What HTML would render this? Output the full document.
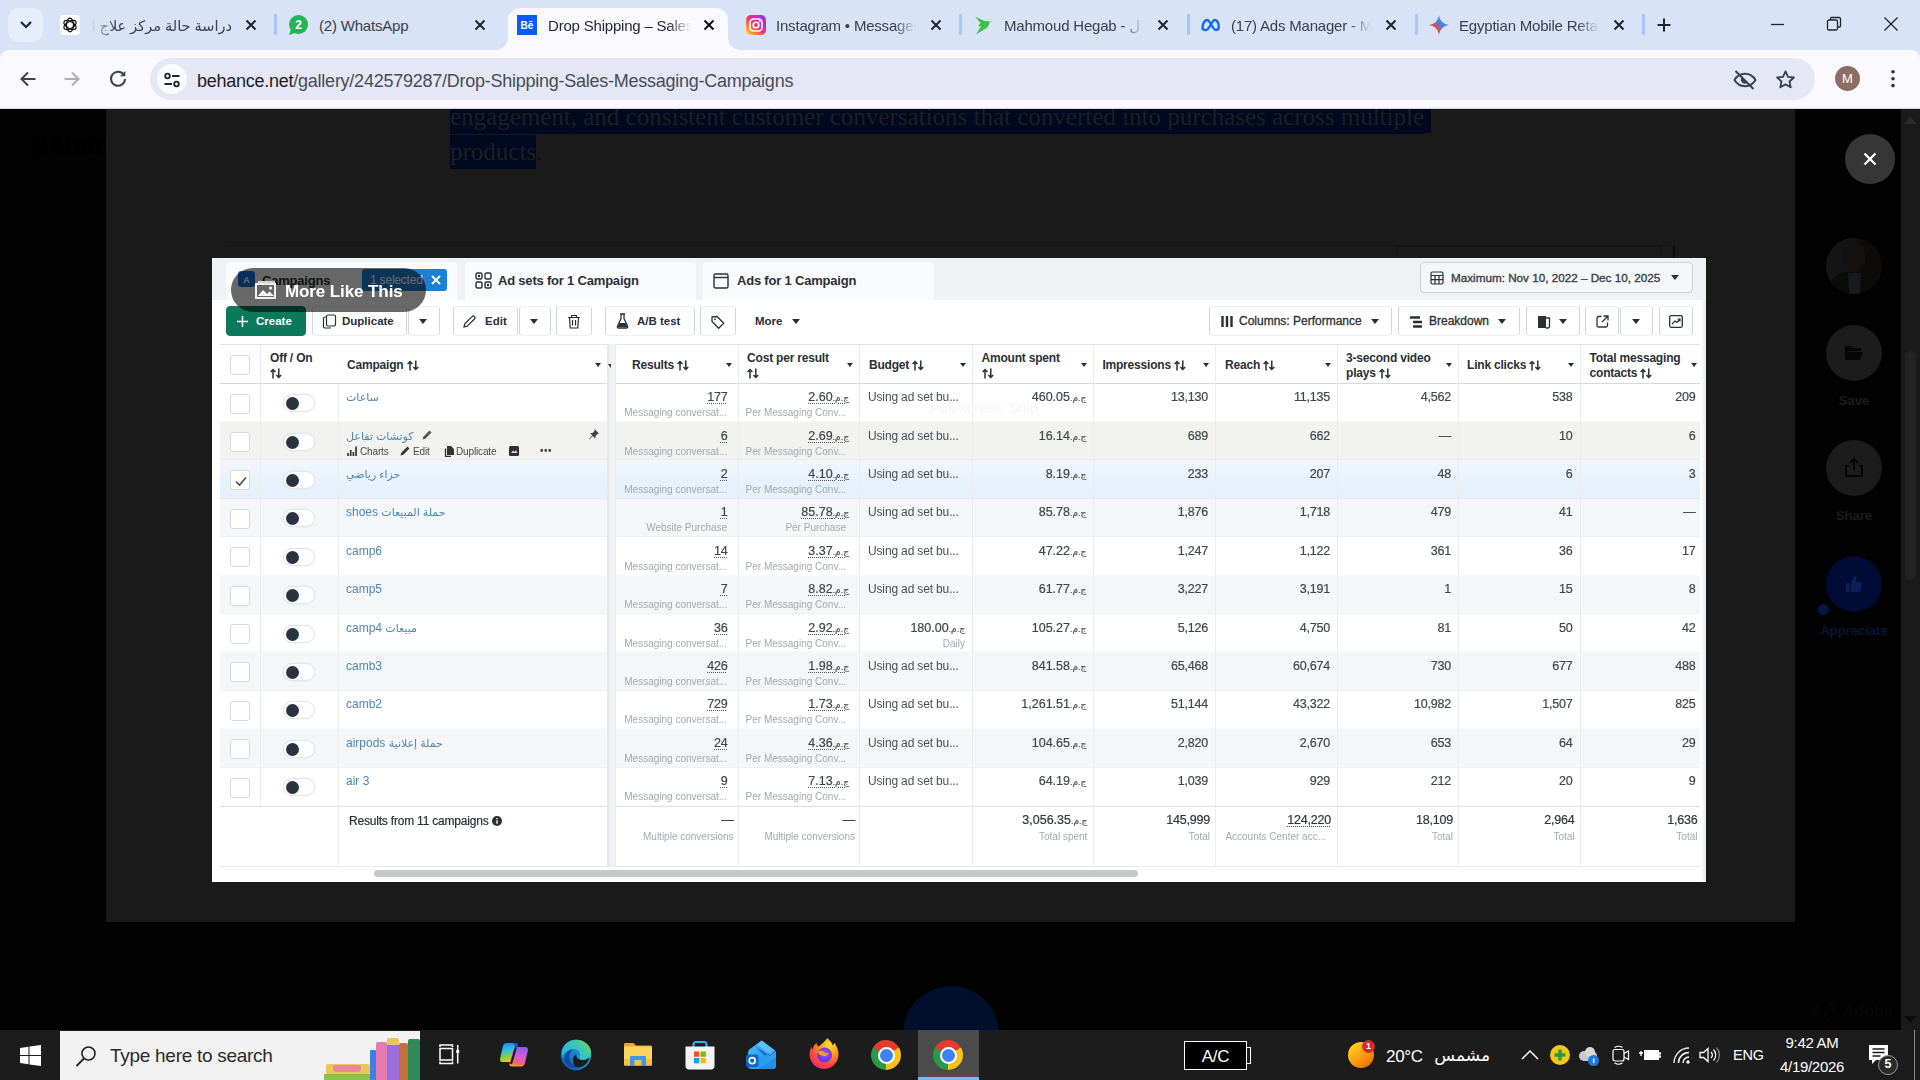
<!DOCTYPE html>
<html lang="en">
<head>
<meta charset="utf-8">
<title>Drop Shipping – Sales Messaging Campaigns</title>
<style>
*{box-sizing:border-box;margin:0;padding:0}
html,body{width:1920px;height:1080px;overflow:hidden;background:#000;font-family:"Liberation Sans","DejaVu Sans",sans-serif;}
.abs{position:absolute}
i{font-style:normal}
#tabstrip{position:absolute;left:0;top:0;width:1920px;height:62px;background:#d8e3f7;}
#toolbar{position:absolute;left:0;top:50px;width:1920px;height:58px;background:#f9f9ff;border-radius:9px 9px 0 0}
#page{position:absolute;left:0;top:108px;width:1920px;height:922px;background:#020202;overflow:hidden}
#taskbar{position:absolute;left:0;top:1030px;width:1920px;height:50px;background:#1c1c1c;}
/* tabs */
.tab{position:absolute;top:8px;height:42px;font-size:15px;color:#3a404c;white-space:nowrap}
.tab .fav{position:absolute;left:0;top:7px;width:20px;height:20px}
.tab .ttl{position:absolute;top:7px;line-height:22px;overflow:hidden;white-space:nowrap;letter-spacing:-0.2px}
.tab .cls{position:absolute;top:8px;width:18px;height:18px}
.tsep{position:absolute;top:14px;width:2.500px;height:21px;background:#a8c5fa;border-radius:1px}
#acttab{position:absolute;left:508px;top:8px;width:220px;height:42px;background:#f9f9ff;border-radius:12px 12px 0 0}
#acttab:before,#acttab:after{content:"";position:absolute;bottom:0;width:12px;height:12px;background:radial-gradient(circle at 0 0,transparent 11.5px,#f9f9ff 12px)}
#acttab:before{left:-12px}
#acttab:after{right:-12px;background:radial-gradient(circle at 100% 0,transparent 11.5px,#f9f9ff 12px)}
#omni{position:absolute;left:150px;top:8px;width:1665px;height:42px;border-radius:21px;background:#e5e8f4}
#url{position:absolute;left:47px;top:10.5px;font-size:18px;line-height:24px;color:#474c59;white-space:nowrap;letter-spacing:-0.25px}
#url b{font-weight:400;color:#1c1e24}
/* page */
#panel{position:absolute;left:106px;top:0;width:1689px;height:814px;background:#1a1a1a}
#sb{position:absolute;left:1901px;top:0;width:19px;height:922px;background:#1a1a1a}
#sbthumb{position:absolute;left:1905px;top:243px;width:11px;height:229px;border-radius:6px;background:#242424}
#seltext{position:absolute;left:450px;top:-9px;width:1020px;font-family:"Liberation Serif",serif;font-size:25px;line-height:35px;color:#0b0b0b}
#seltext span{color:#1f1f1f;background:#000920;padding:3px 0 3.5px;-webkit-box-decoration-break:clone;box-decoration-break:clone}
#img{position:absolute;left:212px;top:150px;width:1494px;height:624px;background:#fff;overflow:hidden;font-family:"Liberation Sans","DejaVu Sans",sans-serif;color:#2a3036}
#img .inner{position:absolute;left:0;top:0;width:1494px;height:624px;filter:blur(0.7px)}
#itabs{position:absolute;left:0;top:0;width:1494px;height:42px;background:#eff1f4}
.itab{position:absolute;top:4px;height:38px;background:#fafbfc;border-radius:4px 4px 0 0;font-size:13px;font-weight:700;color:#2a3036;line-height:37px;white-space:nowrap;letter-spacing:-0.2px}
#ibar{position:absolute;left:0;top:42px;width:1494px;height:44px;background:#fff}
.btn{position:absolute;top:6px;height:29.5px;border:1px solid #d2d5d9;border-top-color:#eceef0;border-bottom-color:#eceef0;border-radius:4px;font-size:11.5px;font-weight:700;color:#2a3036;line-height:29px;white-space:nowrap;background:#fff}
.btn.nb{border-color:transparent}
.caret{display:inline-block;width:0;height:0;border-left:4.5px solid transparent;border-right:4.5px solid transparent;border-top:5.5px solid #2a3036;vertical-align:middle}
#ihead{z-index:2;position:absolute;left:0;top:86px;width:1494px;height:40px;background:#fff;border-top:1px solid #dfe1e5;border-bottom:1px solid #d5d8dc}
.th{position:absolute;top:0;height:38px;font-size:12px;font-weight:700;color:#2a3036;line-height:15.5px;white-space:nowrap;letter-spacing:-0.2px}
.th .c{position:absolute;right:6px;top:12.5px;line-height:15px}
.th .c .caret{border-left-width:3.5px;border-right-width:3.5px;border-top-width:4.5px}
.srt{vertical-align:-1.5px}
.vl{z-index:3;position:absolute;width:1px;background:#eaecef}
.row{position:absolute;left:0;width:1494px;height:38.4px;box-shadow:inset 0 -1px 0 rgba(0,0,0,.025)}
.row>div,.row>svg{position:absolute}
.cb{width:20px;height:20px;border:1px solid #d6d9dd;border-radius:3px;background:#fff}
.tg{width:32px;height:18px;border-radius:9px;background:#fdfdfd;border:1px solid #e4e6e9;box-shadow:0 0 2px rgba(0,0,0,.08)}
.tg i{position:absolute;left:2px;top:2px;width:13px;height:13px;border-radius:7px;background:#2a3340}
.nm{font-size:12px;color:#4f86b4;line-height:16px;white-space:nowrap}
.ar{font-size:11px}
.acts{font-size:10px;color:#4a4a4a;white-space:nowrap;line-height:13px;letter-spacing:-0.15px}
.num{font-size:12.5px;letter-spacing:-0.2px;-webkit-text-stroke:0.2px currentColor;text-align:right;line-height:16px;color:#41464c;white-space:nowrap}
.txt{font-size:12px;letter-spacing:-0.15px;line-height:16px;color:#4a4f55;white-space:nowrap}
.sub{font-size:10px;text-align:right;line-height:12px;color:#a4a8ad;white-space:nowrap}
.ul{text-decoration:underline dotted #555;text-underline-offset:2px;text-decoration-thickness:1px}
.cur{font-size:9px;unicode-bidi:isolate;color:#555}
</style>
</head>
<body>
<div id="tabstrip">
  <div class="abs" style="left:8px;top:8px;width:35px;height:34px;border-radius:10px;background:#e6edfb"></div>
  <svg class="abs" style="left:18px;top:18px" width="16" height="14" viewBox="0 0 16 14"><path d="M3 4l5 5 5-5" fill="none" stroke="#1f2430" stroke-width="2.2"/></svg>
  <div id="acttab"></div>
  <!-- tab 1 -->
  <div class="tab" style="left:60px;width:210px">
    <svg class="fav" viewBox="0 0 20 20"><rect width="20" height="20" rx="4" fill="#fff"/><g fill="none" stroke="#111" stroke-width="1.250"><ellipse cx="10" cy="10" rx="6.800" ry="3.500" transform="rotate(30 10 10)"/><ellipse cx="10" cy="10" rx="6.800" ry="3.500" transform="rotate(90 10 10)"/><ellipse cx="10" cy="10" rx="6.800" ry="3.500" transform="rotate(150 10 10)"/></g></svg>
    <div class="ttl" dir="rtl" style="left:30px;width:142px;text-align:right;font-size:14.5px;-webkit-mask-image:linear-gradient(to right,transparent 0,#000 26px);mask-image:linear-gradient(to right,transparent 0,#000 26px)">دراسة حالة مركز علاج الإدمان</div>
    <svg class="cls" style="left:182px" viewBox="0 0 18 18"><path d="M4.500 4.500l9 9M13.500 4.500l-9 9" stroke="#1f2430" stroke-width="2"/></svg>
  </div>
  <div class="tsep" style="left:274px"></div>
  <!-- tab 2 -->
  <div class="tab" style="left:288px;width:210px">
    <svg class="fav" viewBox="0 0 20 20"><circle cx="10.500" cy="9.500" r="9.500" fill="#25b355"/><path d="M1 20l2-6 4 4z" fill="#25b355"/><text x="10.500" y="14" text-anchor="middle" font-size="12" font-weight="700" fill="#fff" font-family="Liberation Sans,sans-serif">2</text></svg>
    <div class="ttl" style="left:31px;width:150px">(2) WhatsApp</div>
    <svg class="cls" style="left:183px" viewBox="0 0 18 18"><path d="M4.500 4.500l9 9M13.500 4.500l-9 9" stroke="#1f2430" stroke-width="2"/></svg>
  </div>
  <!-- tab 3 active -->
  <div class="tab" style="left:517px;width:210px;color:#1f2430">
    <svg class="fav" viewBox="0 0 20 20"><rect width="20" height="20" fill="#0b5cff"/><text x="10" y="14" text-anchor="middle" font-size="10" font-weight="700" fill="#fff" font-family="Liberation Sans,sans-serif">Bē</text></svg>
    <div class="ttl" style="left:31px;width:143px;-webkit-mask-image:linear-gradient(to left,transparent 0,#000 22px);mask-image:linear-gradient(to left,transparent 0,#000 22px)">Drop Shipping – Sales Messaging</div>
    <svg class="cls" style="left:183px" viewBox="0 0 18 18"><path d="M4.500 4.500l9 9M13.500 4.500l-9 9" stroke="#111" stroke-width="2"/></svg>
  </div>
  <!-- tab 4 -->
  <div class="tab" style="left:746px;width:210px">
    <svg class="fav" viewBox="0 0 20 20"><defs><linearGradient id="ig" x1="0" y1="1" x2="1" y2="0"><stop offset="0" stop-color="#ffd83a"/><stop offset=".25" stop-color="#ff8a2a"/><stop offset=".5" stop-color="#f5307a"/><stop offset=".75" stop-color="#c82ac8"/><stop offset="1" stop-color="#6a3fe0"/></linearGradient></defs><rect width="20" height="20" rx="5" fill="url(#ig)"/><rect x="4" y="4" width="12" height="12" rx="3.500" fill="none" stroke="#fff" stroke-width="1.600"/><circle cx="10" cy="10" r="2.800" fill="none" stroke="#fff" stroke-width="1.600"/><circle cx="13.700" cy="6.300" r="1" fill="#fff"/></svg>
    <div class="ttl" style="left:30px;width:140px;-webkit-mask-image:linear-gradient(to left,transparent 0,#000 22px);mask-image:linear-gradient(to left,transparent 0,#000 22px)">Instagram • Messages</div>
    <svg class="cls" style="left:181px" viewBox="0 0 18 18"><path d="M4.500 4.500l9 9M13.500 4.500l-9 9" stroke="#1f2430" stroke-width="2"/></svg>
  </div>
  <div class="tsep" style="left:959px"></div>
  <!-- tab 5 -->
  <div class="tab" style="left:974px;width:210px">
    <svg class="fav" viewBox="0 0 20 20"><path d="M19.500 6.500l-4.200.3c-1-.9-2.600-1-3.800-.2L1 1.500l5.500 6.500L4 11.500l3-.5L2 19.500l8-5c3.200-1 5.200-3.800 5.500-7z" fill="#3cc04a"/></svg>
    <div class="ttl" style="left:30px;width:140px;-webkit-mask-image:linear-gradient(to left,transparent 0,#000 22px);mask-image:linear-gradient(to left,transparent 0,#000 22px)">Mahmoud Hegab - ل</div>
    <svg class="cls" style="left:180px" viewBox="0 0 18 18"><path d="M4.500 4.500l9 9M13.500 4.500l-9 9" stroke="#1f2430" stroke-width="2"/></svg>
  </div>
  <div class="tsep" style="left:1187px"></div>
  <!-- tab 6 -->
  <div class="tab" style="left:1200px;width:210px">
    <svg class="fav" style="width:22px" viewBox="0 0 22 20"><path d="M2.500 13c0-4 2-8 4.500-8 3.500 0 5.500 10 9 10 1.800 0 2.800-1.500 2.800-3.500 0-3-1.500-6.500-3.800-6.500-3.500 0-5.500 10-9 10C3.800 15 2.500 14.500 2.500 13z" fill="none" stroke="#0a66ff" stroke-width="2.300"/></svg>
    <div class="ttl" style="left:31px;width:140px;-webkit-mask-image:linear-gradient(to left,transparent 0,#000 22px);mask-image:linear-gradient(to left,transparent 0,#000 22px)">(17) Ads Manager - Manage</div>
    <svg class="cls" style="left:182px" viewBox="0 0 18 18"><path d="M4.500 4.500l9 9M13.500 4.500l-9 9" stroke="#1f2430" stroke-width="2"/></svg>
  </div>
  <div class="tsep" style="left:1415px"></div>
  <!-- tab 7 -->
  <div class="tab" style="left:1429px;width:210px">
    <svg class="fav" viewBox="0 0 20 20"><defs><linearGradient id="gm" x1="0" y1="1" x2="1" y2="0"><stop offset="0" stop-color="#f4b400"/><stop offset=".3" stop-color="#ea4335"/><stop offset=".6" stop-color="#4285f4"/><stop offset="1" stop-color="#34a853"/></linearGradient></defs><path d="M10 0c.6 5.500 4.500 9.400 10 10-5.500.6-9.400 4.500-10 10-.6-5.500-4.500-9.400-10-10 5.500-.6 9.400-4.500 10-10z" fill="url(#gm)"/></svg>
    <div class="ttl" style="left:30px;width:140px;-webkit-mask-image:linear-gradient(to left,transparent 0,#000 22px);mask-image:linear-gradient(to left,transparent 0,#000 22px)">Egyptian Mobile Retail</div>
    <svg class="cls" style="left:181px" viewBox="0 0 18 18"><path d="M4.500 4.500l9 9M13.500 4.500l-9 9" stroke="#1f2430" stroke-width="2"/></svg>
  </div>
  <div class="tsep" style="left:1642px"></div>
  <svg class="abs" style="left:1655px;top:16px" width="18" height="18" viewBox="0 0 18 18"><path d="M9 2.500v13M2.500 9h13" stroke="#1f2430" stroke-width="2"/></svg>
  <!-- window controls -->
  <svg class="abs" style="left:1770px;top:16px" width="16" height="16" viewBox="0 0 16 16"><path d="M1 8.500h13" stroke="#1f2430" stroke-width="1.300"/></svg>
  <svg class="abs" style="left:1826px;top:16px" width="16" height="16" viewBox="0 0 16 16"><rect x="1.500" y="4" width="10" height="10" rx="1.500" fill="none" stroke="#1f2430" stroke-width="1.300"/><path d="M4.500 4V2.500a1 1 0 011-1h7.500a1.500 1.500 0 011.500 1.500V10a1 1 0 01-1 1h-1.500" fill="none" stroke="#1f2430" stroke-width="1.300"/></svg>
  <svg class="abs" style="left:1883px;top:16px" width="16" height="16" viewBox="0 0 16 16"><path d="M1.500 1.500l13 13M14.500 1.500l-13 13" stroke="#1f2430" stroke-width="1.300"/></svg>
</div>
<div class="abs" style="left:0;top:108px;width:1920px;height:1px;background:#d5d8e0;z-index:9"></div>
<div id="toolbar">
  <svg class="abs" style="left:18px;top:19px" width="20" height="20" viewBox="0 0 20 20"><path d="M17.500 10H3.500M10 3.500L3.500 10l6.500 6.500" fill="none" stroke="#3a4150" stroke-width="2"/></svg>
  <svg class="abs" style="left:62px;top:19px" width="20" height="20" viewBox="0 0 20 20"><path d="M2.500 10h14M10 3.500l6.500 6.500-6.500 6.500" fill="none" stroke="#a9adb8" stroke-width="2"/></svg>
  <svg class="abs" style="left:107px;top:18px" width="22" height="22" viewBox="0 0 22 22"><path d="M17.200 7.500A7 7 0 1018 11" fill="none" stroke="#3a4150" stroke-width="2"/><path d="M18.300 3v5.300H13z" fill="#3a4150"/></svg>
  <div id="omni">
    <div class="abs" style="left:7px;top:6px;width:30px;height:30px;border-radius:15px;background:#fafbff"></div>
    <svg class="abs" style="left:13px;top:13px" width="18" height="18" viewBox="0 0 18 18"><g fill="none" stroke="#1f2430" stroke-width="1.800"><circle cx="4.500" cy="5" r="2.300"/><path d="M9 5h7.500M1.500 13H9"/><circle cx="13.500" cy="13" r="2.300"/></g></svg>
    <div id="url"><b>behance.net</b>/gallery/242579287/Drop-Shipping-Sales-Messaging-Campaigns</div>
    <svg class="abs" style="left:1583px;top:11px" width="24" height="22" viewBox="0 0 24 22"><g fill="none" stroke="#3a3f4a" stroke-width="1.900"><path d="M1.500 11c2.300-4 6-6.200 10.500-6.200S20.200 7 22.500 11c-2.300 4-6 6.200-10.500 6.200S3.800 15 1.500 11z"/><path d="M2.500 2l18 18"/></g><path d="M8.500 8.500a4 4 0 005.500 5.500z" fill="#3a3f4a"/></svg>
    <svg class="abs" style="left:1625px;top:11px" width="21" height="21" viewBox="0 0 22 22"><path d="M11 2.500l2.600 5.700 6.200.7-4.600 4.200 1.300 6.100L11 16.100l-5.500 3.100 1.300-6.100L2.200 8.900l6.200-.7z" fill="none" stroke="#3a3f4a" stroke-width="1.900" stroke-linejoin="round"/></svg>
  </div>
  <div class="abs" style="left:1835px;top:16px;width:25px;height:25px;border-radius:13px;background:#8d6e63;color:#fff;font-size:13px;line-height:26px;text-align:center">M</div>
  <svg class="abs" style="left:1888.500px;top:18px" width="8" height="22" viewBox="0 0 8 22"><circle cx="4" cy="3.800" r="1.800" fill="#2a3140"/><circle cx="4" cy="10.700" r="1.800" fill="#2a3140"/><circle cx="4" cy="17.600" r="1.800" fill="#2a3140"/></svg>
</div>
<div id="page">
  <div class="abs" style="left:30px;top:22px;font-size:26px;font-weight:700;color:#000;letter-spacing:0.5px">Bēhance</div>
  <div id="panel"></div>
  <div class="abs" style="left:1424px;top:1px;width:7px;height:24px;background:#000920"></div>
  <div id="seltext"><span>engagement, and consistent customer conversations that converted into purchases across multiple products</span>.</div>
  <div class="abs" style="left:225px;top:137px;width:1450px;height:14px;border-top:1px solid #141414;border-right:2px solid #0c0c0c"></div>
  <div class="abs" style="left:1397px;top:138px;width:265px;height:12px;border:1px solid #141414;border-bottom:0;border-radius:3px 3px 0 0"></div>
  <div id="img"><div class="inner">
    <div id="itabs">
      <div class="itab" style="left:14px;width:231px">
        <div class="abs" style="left:12px;top:9px;width:17px;height:16px;border-radius:3px;background:#1a72e0;color:#fff;font-size:9px;line-height:18px;text-align:center;font-weight:700">A</div>
        <div class="abs" style="left:36px;top:0">Campaigns</div>
        <div class="abs" style="left:136px;top:7px;width:85px;height:22px;border-radius:3px;background:#1b7fd3;color:#fff;font-size:12px;font-weight:400;line-height:22px;padding-left:8px">1 selected</div>
        <svg class="abs" style="left:205px;top:13px" width="10" height="10" viewBox="0 0 10 10"><path d="M1 1l8 8M9 1L1 9" stroke="#fff" stroke-width="1.800"/></svg>
      </div>
      <div class="itab" style="left:253px;width:231px">
        <svg class="abs" style="left:10px;top:10px" width="17" height="17" viewBox="0 0 17 17"><g fill="none" stroke="#2a3036" stroke-width="1.400"><rect x="1" y="1" width="6" height="6" rx="1.500"/><rect x="10" y="1" width="6" height="6" rx="1.500"/><rect x="1" y="10" width="6" height="6" rx="1.500"/><rect x="10" y="10" width="6" height="6" rx="1.500"/></g><circle cx="4" cy="4" r="1.200" fill="#2a3036"/><circle cx="13" cy="13" r="1.200" fill="#2a3036"/></svg>
        <div class="abs" style="left:33px;top:0">Ad sets for 1 Campaign</div>
      </div>
      <div class="itab" style="left:491px;width:231px">
        <svg class="abs" style="left:10px;top:11px" width="16" height="16" viewBox="0 0 16 16"><rect x="1" y="1" width="14" height="14" rx="1.500" fill="none" stroke="#2a3036" stroke-width="1.400"/><path d="M1 4.500h14" stroke="#2a3036" stroke-width="1.400"/></svg>
        <div class="abs" style="left:34px;top:0">Ads for 1 Campaign</div>
      </div>
      <div class="abs" style="left:1208px;top:4px;width:273px;height:31px;border:1px solid #ccd0d5;border-radius:4px;background:#f5f6f7;font-size:11.5px;font-weight:700;line-height:30px;color:#2a3036;white-space:nowrap">
        <svg class="abs" style="left:9px;top:8px" width="14" height="14" viewBox="0 0 14 14"><g fill="none" stroke="#2a3036" stroke-width="1.200"><rect x="1" y="1" width="12" height="12" rx="1.500"/><path d="M1 4.500h12M1 8.700h12M5 4.500V13M9 4.500V13"/></g></svg>
        <div class="abs" style="left:30px;top:0;font-weight:400;font-size:11.700px;color:#3a4046;-webkit-text-stroke:0.35px #3a4046">Maximum: Nov 10, 2022 – Dec 10, 2025</div>
        <span class="caret abs" style="left:250px;top:12px"></span>
      </div>
    </div>
    <div id="ibar">
      <div class="btn" style="left:14px;width:80px;background:#0b7a5b;border-color:#0b7a5b;color:#fff"><svg class="abs" style="left:10px;top:9px" width="11" height="11" viewBox="0 0 11 11"><path d="M5.500 0v11M0 5.500h11" stroke="#fff" stroke-width="1.500"/></svg><span class="abs" style="left:29px;top:0">Create</span></div>
      <div class="btn" style="left:100px;width:95px"><svg class="abs" style="left:9px;top:7px" width="15" height="15" viewBox="0 0 15 15"><g fill="none" stroke="#2a3036" stroke-width="1.200"><rect x="4.500" y="1" width="9" height="11" rx="1.500"/><path d="M4.500 3H3a1.500 1.500 0 00-1.500 1.500v8A1.500 1.500 0 003 14h6"/></g></svg><span class="abs" style="left:29px;top:0">Duplicate</span></div>
      <div class="btn" style="left:196px;width:32px"><span class="caret abs" style="left:10px;top:12px"></span></div>
      <div class="btn" style="left:241px;width:65px"><svg class="abs" style="left:9px;top:8px" width="13" height="13" viewBox="0 0 13 13"><path d="M1 12l.8-3.200 7.500-7.500a1.200 1.200 0 011.700 0l.7.700a1.200 1.200 0 010 1.700L4.200 11.200z" fill="none" stroke="#2a3036" stroke-width="1.200"/></svg><span class="abs" style="left:31px;top:0">Edit</span></div>
      <div class="btn" style="left:307px;width:32px"><span class="caret abs" style="left:10px;top:12px"></span></div>
      <div class="btn" style="left:344px;width:36px"><svg class="abs" style="left:10px;top:7px" width="14" height="15" viewBox="0 0 14 15"><g fill="none" stroke="#2a3036" stroke-width="1.200"><path d="M1 3.500h12M4.500 3.500V1.500h5v2M2.500 3.500l.7 10.500h7.600l.7-10.500M5.500 6v5.500M8.500 6v5.500"/></g></svg></div>
      <div class="btn" style="left:393px;width:90px"><svg class="abs" style="left:10px;top:6px" width="13" height="16" viewBox="0 0 13 16"><path d="M4 1h5M5 1v4.500L1.500 13a1.300 1.300 0 001.200 2h7.600a1.300 1.300 0 001.200-2L8 5.500V1" fill="none" stroke="#2a3036" stroke-width="1.300"/><path d="M3.500 10h6l2 4h-10z" fill="#2a3036"/></svg><span class="abs" style="left:31px;top:0">A/B test</span></div>
      <div class="btn" style="left:488px;width:36px"><svg class="abs" style="left:10px;top:8px" width="14" height="14" viewBox="0 0 14 14"><path d="M1 1.800v4.700l6.700 6.700 5-5L6 1.500z" fill="none" stroke="#2a3036" stroke-width="1.300" stroke-linejoin="round"/><circle cx="4" cy="4.300" r=".9" fill="#2a3036"/></svg></div>
      <div class="btn nb" style="left:532px;width:70px"><span class="abs" style="left:10px;top:0">More</span><span class="caret abs" style="left:47px;top:12px"></span></div>
      <div class="btn" style="left:997px;width:183px"><svg class="abs" style="left:11px;top:9px" width="12" height="11" viewBox="0 0 12 11"><path d="M1.500 0v11M6 0v11M10.500 0v11" stroke="#2a3036" stroke-width="2.400"/></svg><span class="abs" style="left:29px;top:0;font-size:12px;font-weight:400;color:#30363c;-webkit-text-stroke:0.35px #30363c">Columns: Performance</span><span class="caret abs" style="left:161px;top:12px"></span></div>
      <div class="btn" style="left:1186px;width:122px"><svg class="abs" style="left:11px;top:9px" width="12" height="12" viewBox="0 0 12 12"><path d="M0 1.500h10M3 6h9M3 10.500h9" stroke="#2a3036" stroke-width="2.600"/></svg><span class="abs" style="left:30px;top:0;font-size:12px;font-weight:400;-webkit-text-stroke:0.35px #30363c">Breakdown</span><span class="caret abs" style="left:99px;top:12px"></span></div>
      <div class="btn" style="left:1314px;width:54px"><svg class="abs" style="left:10px;top:8px" width="14" height="14" viewBox="0 0 14 14"><path d="M1 1h8v12H1z" fill="#2a3036"/><path d="M9 3h3.500v8.500A1.500 1.500 0 0111 13H9" fill="none" stroke="#2a3036" stroke-width="1.300"/></svg><span class="caret abs" style="left:32px;top:12px"></span></div>
      <div class="btn" style="left:1373px;width:34px"><svg class="abs" style="left:10px;top:8px" width="13" height="13" viewBox="0 0 13 13"><path d="M5.500 1.500H2.500a1.500 1.500 0 00-1.500 1.500v7.500A1.500 1.500 0 002.500 12H10a1.500 1.500 0 001.500-1.500V7.500M7.500 1h4.500v4.500M12 1L6 7" fill="none" stroke="#2a3036" stroke-width="1.300"/></svg></div>
      <div class="btn" style="left:1408px;width:33px"><span class="caret abs" style="left:11px;top:12px"></span></div>
      <div class="btn" style="left:1447px;width:34px"><svg class="abs" style="left:9px;top:8px" width="14" height="13" viewBox="0 0 14 13"><rect x=".700" y=".700" width="12.600" height="11.600" rx="1.500" fill="none" stroke="#2a3036" stroke-width="1.300"/><path d="M3 9l3-3 2 1.500L11 4M8.500 4H11v2.500" fill="none" stroke="#2a3036" stroke-width="1.200"/></svg></div>
    </div>
<div id="ihead">
<div class="cb abs" style="left:18px;top:10px"></div>
<div class="th" style="left:58px;top:5.5px">Off / On<br><svg class="srt" width="12" height="11" viewBox="0 0 12 11"><path d="M3 10.500V1.500M0.600 4L3 1.500 5.400 4M8.800 0.500v9M6.400 7l2.400 2.500L11.200 7" fill="none" stroke="#2a3036" stroke-width="1.500"/></svg></div>
<div class="th" style="left:126px;width:268.6px"><div class="abs" style="left:9px;top:13px">Campaign <svg class="srt" width="12" height="11" viewBox="0 0 12 11"><path d="M3 10.500V1.500M0.600 4L3 1.500 5.400 4M8.800 0.500v9M6.400 7l2.400 2.500L11.200 7" fill="none" stroke="#2a3036" stroke-width="1.500"/></svg></div><span class="c"><span class="caret"></span></span></div>
<div class="th" style="left:404.5px;width:121.1px"><div class="abs" style="left:15.5px;top:13px">Results <svg class="srt" width="12" height="11" viewBox="0 0 12 11"><path d="M3 10.500V1.500M0.600 4L3 1.500 5.400 4M8.800 0.500v9M6.400 7l2.400 2.500L11.200 7" fill="none" stroke="#2a3036" stroke-width="1.500"/></svg></div><span class="c"><span class="caret"></span></span></div>
<div class="th" style="left:525.6px;width:121.4px"><div class="abs" style="left:9.5px;top:5.5px">Cost per result<br><svg class="srt" width="12" height="11" viewBox="0 0 12 11"><path d="M3 10.500V1.500M0.600 4L3 1.500 5.400 4M8.800 0.500v9M6.400 7l2.400 2.500L11.200 7" fill="none" stroke="#2a3036" stroke-width="1.500"/></svg></div><span class="c"><span class="caret"></span></span></div>
<div class="th" style="left:647px;width:113.0px"><div class="abs" style="left:10px;top:13px">Budget <svg class="srt" width="12" height="11" viewBox="0 0 12 11"><path d="M3 10.500V1.500M0.600 4L3 1.500 5.400 4M8.800 0.500v9M6.400 7l2.400 2.500L11.200 7" fill="none" stroke="#2a3036" stroke-width="1.500"/></svg></div><span class="c"><span class="caret"></span></span></div>
<div class="th" style="left:760px;width:121.4px"><div class="abs" style="left:9.5px;top:5.5px">Amount spent<br><svg class="srt" width="12" height="11" viewBox="0 0 12 11"><path d="M3 10.500V1.500M0.600 4L3 1.500 5.400 4M8.800 0.500v9M6.400 7l2.400 2.500L11.200 7" fill="none" stroke="#2a3036" stroke-width="1.500"/></svg></div><span class="c"><span class="caret"></span></span></div>
<div class="th" style="left:881.4px;width:121.6px"><div class="abs" style="left:9px;top:13px">Impressions <svg class="srt" width="12" height="11" viewBox="0 0 12 11"><path d="M3 10.500V1.500M0.600 4L3 1.500 5.400 4M8.800 0.500v9M6.400 7l2.400 2.500L11.200 7" fill="none" stroke="#2a3036" stroke-width="1.500"/></svg></div><span class="c"><span class="caret"></span></span></div>
<div class="th" style="left:1003px;width:122.0px"><div class="abs" style="left:10px;top:13px">Reach <svg class="srt" width="12" height="11" viewBox="0 0 12 11"><path d="M3 10.500V1.500M0.600 4L3 1.500 5.400 4M8.800 0.500v9M6.400 7l2.400 2.500L11.200 7" fill="none" stroke="#2a3036" stroke-width="1.500"/></svg></div><span class="c"><span class="caret"></span></span></div>
<div class="th" style="left:1125px;width:121.0px"><div class="abs" style="left:9px;top:5.5px">3-second video<br>plays <svg class="srt" width="12" height="11" viewBox="0 0 12 11"><path d="M3 10.500V1.500M0.600 4L3 1.500 5.400 4M8.800 0.500v9M6.400 7l2.400 2.500L11.200 7" fill="none" stroke="#2a3036" stroke-width="1.500"/></svg></div><span class="c"><span class="caret"></span></span></div>
<div class="th" style="left:1246px;width:121.6px"><div class="abs" style="left:9px;top:13px">Link clicks <svg class="srt" width="12" height="11" viewBox="0 0 12 11"><path d="M3 10.500V1.500M0.600 4L3 1.500 5.400 4M8.800 0.500v9M6.400 7l2.400 2.500L11.200 7" fill="none" stroke="#2a3036" stroke-width="1.500"/></svg></div><span class="c"><span class="caret"></span></span></div>
<div class="th" style="left:1367.6px;width:123.9px"><div class="abs" style="left:10px;top:5.5px">Total messaging<br>contacts <svg class="srt" width="12" height="11" viewBox="0 0 12 11"><path d="M3 10.500V1.500M0.600 4L3 1.500 5.400 4M8.800 0.500v9M6.400 7l2.400 2.500L11.200 7" fill="none" stroke="#2a3036" stroke-width="1.500"/></svg></div><span class="c"><span class="caret"></span></span></div>
</div>
<div class="row" style="top:125.6px;background:#fff">
<div class="cb" style="left:18px;top:10px"></div>
<div class="tg" style="left:70.5px;top:10.5px"><i></i></div>
<div class="nm" style="left:134px;top:5.5px"><span class="ar">ساعات</span></div>
<div class="num" style="left:404.5px;width:111.1px;top:5.5px"><span class="ul">177</span></div>
<div class="sub" style="left:404.5px;width:110.6px;top:23.5px">Messaging conversat...</div>
<div class="num" style="left:525.6px;width:111.4px;top:5.5px"><span class="ul">2.60<span class="cur" dir="rtl">ج.م.</span></span></div>
<div class="sub" style="left:525.6px;width:108.4px;top:23.5px">Per Messaging Conv...</div>
<div class="txt" style="left:656.0px;top:5.5px">Using ad set bu...</div>
<div class="num" style="left:760px;width:114.4px;top:5.5px">460.05<span class="cur" dir="rtl">ج.م.</span></div>
<div class="num" style="left:881.4px;width:114.6px;top:5.5px">13,130</div>
<div class="num" style="left:1003px;width:115.0px;top:5.5px">11,135</div>
<div class="num" style="left:1125px;width:114.0px;top:5.5px">4,562</div>
<div class="num" style="left:1246px;width:114.6px;top:5.5px">538</div>
<div class="num" style="left:1367.6px;width:115.9px;top:5.5px">209</div>
</div>
<div class="row" style="top:164.0px;background:#f2f2f1">
<div class="cb" style="left:18px;top:10px"></div>
<div class="tg" style="left:70.5px;top:10.5px"><i></i></div>
<div class="nm" style="left:134px;top:5.5px"><span class="ar">كوتشات تفاعل</span></div>
<svg style="left:134.500px;top:24px" width="10" height="10" viewBox="0 0 10 10"><path d="M1 10V7M3.700 10V4M6.400 10V6M9 10V0.500" stroke="#333" stroke-width="1.700"/></svg>
<div class="acts" style="left:148px;top:23px">Charts</div>
<svg style="left:188px;top:24px" width="10" height="10" viewBox="0 0 10 10"><path d="M0.500 9.500l.8-2.800L7.500.5l2 2-6.200 6.200z" fill="#333"/></svg>
<div class="acts" style="left:201px;top:23px">Edit</div>
<svg style="left:231px;top:23.500px" width="11" height="11" viewBox="0 0 11 11"><path d="M4 0h4l3 3v6H4z" fill="#333"/><path d="M2.500 2.500v8H8" fill="none" stroke="#333" stroke-width="1.300"/></svg>
<div class="acts" style="left:244px;top:23px">Duplicate</div>
<svg style="left:297px;top:24px" width="10" height="10" viewBox="0 0 10 10"><rect width="10" height="10" rx="1.500" fill="#2a3036"/><path d="M2 7l2-2.500 1.500 1.500L7 4l1.500 3z" fill="#ddd"/></svg>
<div class="acts" style="left:328px;top:22px;letter-spacing:0.5px;font-weight:700">•••</div>
<svg style="left:210px;top:8px" width="10" height="10" viewBox="0 0 10 10"><path d="M0.500 9.500l.8-2.800L7.500.5l2 2-6.200 6.200z" fill="#555"/></svg>
<svg style="left:377px;top:7px" width="10" height="11" viewBox="0 0 10 11"><path d="M5.500 0L10 4.500 8.500 5 6.500 7l-.3 2.500L3.800 7 .5 10.500 0 10l3.300-3.500L1 4.200 3.500 4l2-2z" fill="#444"/></svg>
<div class="num" style="left:404.5px;width:111.1px;top:5.5px"><span class="ul">6</span></div>
<div class="sub" style="left:404.5px;width:110.6px;top:23.5px">Messaging conversat...</div>
<div class="num" style="left:525.6px;width:111.4px;top:5.5px"><span class="ul">2.69<span class="cur" dir="rtl">ج.م.</span></span></div>
<div class="sub" style="left:525.6px;width:108.4px;top:23.5px">Per Messaging Conv...</div>
<div class="txt" style="left:656.0px;top:5.5px">Using ad set bu...</div>
<div class="num" style="left:760px;width:114.4px;top:5.5px">16.14<span class="cur" dir="rtl">ج.م.</span></div>
<div class="num" style="left:881.4px;width:114.6px;top:5.5px">689</div>
<div class="num" style="left:1003px;width:115.0px;top:5.5px">662</div>
<div class="num" style="left:1125px;width:114.0px;top:5.5px">—</div>
<div class="num" style="left:1246px;width:114.6px;top:5.5px">10</div>
<div class="num" style="left:1367.6px;width:115.9px;top:5.5px">6</div>
</div>
<div class="row" style="top:202.4px;background:linear-gradient(#f1f7fd,#e7f1fb 60%)">
<div class="cb" style="left:18px;top:10px"><svg width="20" height="20" viewBox="0 0 20 20"><path d="M5 10.5l3.5 3.5L15 6.5" fill="none" stroke="#35506e" stroke-width="1.6"/></svg></div>
<div class="tg" style="left:70.5px;top:10.5px"><i></i></div>
<div class="nm" style="left:134px;top:5.5px"><span class="ar">حزاء رياضي</span></div>
<div class="num" style="left:404.5px;width:111.1px;top:5.5px"><span class="ul">2</span></div>
<div class="sub" style="left:404.5px;width:110.6px;top:23.5px">Messaging conversat...</div>
<div class="num" style="left:525.6px;width:111.4px;top:5.5px"><span class="ul">4.10<span class="cur" dir="rtl">ج.م.</span></span></div>
<div class="sub" style="left:525.6px;width:108.4px;top:23.5px">Per Messaging Conv...</div>
<div class="txt" style="left:656.0px;top:5.5px">Using ad set bu...</div>
<div class="num" style="left:760px;width:114.4px;top:5.5px">8.19<span class="cur" dir="rtl">ج.م.</span></div>
<div class="num" style="left:881.4px;width:114.6px;top:5.5px">233</div>
<div class="num" style="left:1003px;width:115.0px;top:5.5px">207</div>
<div class="num" style="left:1125px;width:114.0px;top:5.5px">48</div>
<div class="num" style="left:1246px;width:114.6px;top:5.5px">6</div>
<div class="num" style="left:1367.6px;width:115.9px;top:5.5px">3</div>
</div>
<div class="row" style="top:240.8px;background:#f5f6f7">
<div class="cb" style="left:18px;top:10px"></div>
<div class="tg" style="left:70.5px;top:10.5px"><i></i></div>
<div class="nm" style="left:134px;top:5.5px">shoes <span class="ar">حملة المبيعات</span></div>
<div class="num" style="left:404.5px;width:111.1px;top:5.5px"><span class="ul">1</span></div>
<div class="sub" style="left:404.5px;width:110.6px;top:23.5px">Website Purchase</div>
<div class="num" style="left:525.6px;width:111.4px;top:5.5px"><span class="ul">85.78<span class="cur" dir="rtl">ج.م.</span></span></div>
<div class="sub" style="left:525.6px;width:108.4px;top:23.5px">Per Purchase</div>
<div class="txt" style="left:656.0px;top:5.5px">Using ad set bu...</div>
<div class="num" style="left:760px;width:114.4px;top:5.5px">85.78<span class="cur" dir="rtl">ج.م.</span></div>
<div class="num" style="left:881.4px;width:114.6px;top:5.5px">1,876</div>
<div class="num" style="left:1003px;width:115.0px;top:5.5px">1,718</div>
<div class="num" style="left:1125px;width:114.0px;top:5.5px">479</div>
<div class="num" style="left:1246px;width:114.6px;top:5.5px">41</div>
<div class="num" style="left:1367.6px;width:115.9px;top:5.5px">—</div>
</div>
<div class="row" style="top:279.2px;background:#fff">
<div class="cb" style="left:18px;top:10px"></div>
<div class="tg" style="left:70.5px;top:10.5px"><i></i></div>
<div class="nm" style="left:134px;top:5.5px">camp6</div>
<div class="num" style="left:404.5px;width:111.1px;top:5.5px"><span class="ul">14</span></div>
<div class="sub" style="left:404.5px;width:110.6px;top:23.5px">Messaging conversat...</div>
<div class="num" style="left:525.6px;width:111.4px;top:5.5px"><span class="ul">3.37<span class="cur" dir="rtl">ج.م.</span></span></div>
<div class="sub" style="left:525.6px;width:108.4px;top:23.5px">Per Messaging Conv...</div>
<div class="txt" style="left:656.0px;top:5.5px">Using ad set bu...</div>
<div class="num" style="left:760px;width:114.4px;top:5.5px">47.22<span class="cur" dir="rtl">ج.م.</span></div>
<div class="num" style="left:881.4px;width:114.6px;top:5.5px">1,247</div>
<div class="num" style="left:1003px;width:115.0px;top:5.5px">1,122</div>
<div class="num" style="left:1125px;width:114.0px;top:5.5px">361</div>
<div class="num" style="left:1246px;width:114.6px;top:5.5px">36</div>
<div class="num" style="left:1367.6px;width:115.9px;top:5.5px">17</div>
</div>
<div class="row" style="top:317.6px;background:#f5f6f7">
<div class="cb" style="left:18px;top:10px"></div>
<div class="tg" style="left:70.5px;top:10.5px"><i></i></div>
<div class="nm" style="left:134px;top:5.5px">camp5</div>
<div class="num" style="left:404.5px;width:111.1px;top:5.5px"><span class="ul">7</span></div>
<div class="sub" style="left:404.5px;width:110.6px;top:23.5px">Messaging conversat...</div>
<div class="num" style="left:525.6px;width:111.4px;top:5.5px"><span class="ul">8.82<span class="cur" dir="rtl">ج.م.</span></span></div>
<div class="sub" style="left:525.6px;width:108.4px;top:23.5px">Per Messaging Conv...</div>
<div class="txt" style="left:656.0px;top:5.5px">Using ad set bu...</div>
<div class="num" style="left:760px;width:114.4px;top:5.5px">61.77<span class="cur" dir="rtl">ج.م.</span></div>
<div class="num" style="left:881.4px;width:114.6px;top:5.5px">3,227</div>
<div class="num" style="left:1003px;width:115.0px;top:5.5px">3,191</div>
<div class="num" style="left:1125px;width:114.0px;top:5.5px">1</div>
<div class="num" style="left:1246px;width:114.6px;top:5.5px">15</div>
<div class="num" style="left:1367.6px;width:115.9px;top:5.5px">8</div>
</div>
<div class="row" style="top:356.0px;background:#fff">
<div class="cb" style="left:18px;top:10px"></div>
<div class="tg" style="left:70.5px;top:10.5px"><i></i></div>
<div class="nm" style="left:134px;top:5.5px">camp4 <span class="ar">مبيعات</span></div>
<div class="num" style="left:404.5px;width:111.1px;top:5.5px"><span class="ul">36</span></div>
<div class="sub" style="left:404.5px;width:110.6px;top:23.5px">Messaging conversat...</div>
<div class="num" style="left:525.6px;width:111.4px;top:5.5px"><span class="ul">2.92<span class="cur" dir="rtl">ج.م.</span></span></div>
<div class="sub" style="left:525.6px;width:108.4px;top:23.5px">Per Messaging Conv...</div>
<div class="num" style="left:647px;width:106.0px;top:5.5px">180.00<span class="cur" dir="rtl">ج.م.</span></div>
<div class="sub" style="left:647px;width:106.0px;top:23.5px">Daily</div>
<div class="num" style="left:760px;width:114.4px;top:5.5px">105.27<span class="cur" dir="rtl">ج.م.</span></div>
<div class="num" style="left:881.4px;width:114.6px;top:5.5px">5,126</div>
<div class="num" style="left:1003px;width:115.0px;top:5.5px">4,750</div>
<div class="num" style="left:1125px;width:114.0px;top:5.5px">81</div>
<div class="num" style="left:1246px;width:114.6px;top:5.5px">50</div>
<div class="num" style="left:1367.6px;width:115.9px;top:5.5px">42</div>
</div>
<div class="row" style="top:394.4px;background:#f5f6f7">
<div class="cb" style="left:18px;top:10px"></div>
<div class="tg" style="left:70.5px;top:10.5px"><i></i></div>
<div class="nm" style="left:134px;top:5.5px">camb3</div>
<div class="num" style="left:404.5px;width:111.1px;top:5.5px"><span class="ul">426</span></div>
<div class="sub" style="left:404.5px;width:110.6px;top:23.5px">Messaging conversat...</div>
<div class="num" style="left:525.6px;width:111.4px;top:5.5px"><span class="ul">1.98<span class="cur" dir="rtl">ج.م.</span></span></div>
<div class="sub" style="left:525.6px;width:108.4px;top:23.5px">Per Messaging Conv...</div>
<div class="txt" style="left:656.0px;top:5.5px">Using ad set bu...</div>
<div class="num" style="left:760px;width:114.4px;top:5.5px">841.58<span class="cur" dir="rtl">ج.م.</span></div>
<div class="num" style="left:881.4px;width:114.6px;top:5.5px">65,468</div>
<div class="num" style="left:1003px;width:115.0px;top:5.5px">60,674</div>
<div class="num" style="left:1125px;width:114.0px;top:5.5px">730</div>
<div class="num" style="left:1246px;width:114.6px;top:5.5px">677</div>
<div class="num" style="left:1367.6px;width:115.9px;top:5.5px">488</div>
</div>
<div class="row" style="top:432.8px;background:#fff">
<div class="cb" style="left:18px;top:10px"></div>
<div class="tg" style="left:70.5px;top:10.5px"><i></i></div>
<div class="nm" style="left:134px;top:5.5px">camb2</div>
<div class="num" style="left:404.5px;width:111.1px;top:5.5px"><span class="ul">729</span></div>
<div class="sub" style="left:404.5px;width:110.6px;top:23.5px">Messaging conversat...</div>
<div class="num" style="left:525.6px;width:111.4px;top:5.5px"><span class="ul">1.73<span class="cur" dir="rtl">ج.م.</span></span></div>
<div class="sub" style="left:525.6px;width:108.4px;top:23.5px">Per Messaging Conv...</div>
<div class="txt" style="left:656.0px;top:5.5px">Using ad set bu...</div>
<div class="num" style="left:760px;width:114.4px;top:5.5px">1,261.51<span class="cur" dir="rtl">ج.م.</span></div>
<div class="num" style="left:881.4px;width:114.6px;top:5.5px">51,144</div>
<div class="num" style="left:1003px;width:115.0px;top:5.5px">43,322</div>
<div class="num" style="left:1125px;width:114.0px;top:5.5px">10,982</div>
<div class="num" style="left:1246px;width:114.6px;top:5.5px">1,507</div>
<div class="num" style="left:1367.6px;width:115.9px;top:5.5px">825</div>
</div>
<div class="row" style="top:471.2px;background:#f5f6f7">
<div class="cb" style="left:18px;top:10px"></div>
<div class="tg" style="left:70.5px;top:10.5px"><i></i></div>
<div class="nm" style="left:134px;top:5.5px">airpods <span class="ar">حملة إعلانية</span></div>
<div class="num" style="left:404.5px;width:111.1px;top:5.5px"><span class="ul">24</span></div>
<div class="sub" style="left:404.5px;width:110.6px;top:23.5px">Messaging conversat...</div>
<div class="num" style="left:525.6px;width:111.4px;top:5.5px"><span class="ul">4.36<span class="cur" dir="rtl">ج.م.</span></span></div>
<div class="sub" style="left:525.6px;width:108.4px;top:23.5px">Per Messaging Conv...</div>
<div class="txt" style="left:656.0px;top:5.5px">Using ad set bu...</div>
<div class="num" style="left:760px;width:114.4px;top:5.5px">104.65<span class="cur" dir="rtl">ج.م.</span></div>
<div class="num" style="left:881.4px;width:114.6px;top:5.5px">2,820</div>
<div class="num" style="left:1003px;width:115.0px;top:5.5px">2,670</div>
<div class="num" style="left:1125px;width:114.0px;top:5.5px">653</div>
<div class="num" style="left:1246px;width:114.6px;top:5.5px">64</div>
<div class="num" style="left:1367.6px;width:115.9px;top:5.5px">29</div>
</div>
<div class="row" style="top:509.6px;background:#fff">
<div class="cb" style="left:18px;top:10px"></div>
<div class="tg" style="left:70.5px;top:10.5px"><i></i></div>
<div class="nm" style="left:134px;top:5.5px">air 3</div>
<div class="num" style="left:404.5px;width:111.1px;top:5.5px"><span class="ul">9</span></div>
<div class="sub" style="left:404.5px;width:110.6px;top:23.5px">Messaging conversat...</div>
<div class="num" style="left:525.6px;width:111.4px;top:5.5px"><span class="ul">7.13<span class="cur" dir="rtl">ج.م.</span></span></div>
<div class="sub" style="left:525.6px;width:108.4px;top:23.5px">Per Messaging Conv...</div>
<div class="txt" style="left:656.0px;top:5.5px">Using ad set bu...</div>
<div class="num" style="left:760px;width:114.4px;top:5.5px">64.19<span class="cur" dir="rtl">ج.م.</span></div>
<div class="num" style="left:881.4px;width:114.6px;top:5.5px">1,039</div>
<div class="num" style="left:1003px;width:115.0px;top:5.5px">929</div>
<div class="num" style="left:1125px;width:114.0px;top:5.5px">212</div>
<div class="num" style="left:1246px;width:114.6px;top:5.5px">20</div>
<div class="num" style="left:1367.6px;width:115.9px;top:5.5px">9</div>
</div>
<div class="abs" style="left:0;top:548.0px;width:1494px;height:61.3px;background:#fff;border-top:1px solid #dddfe3;border-bottom:1px solid #e8eaed"></div>
<div class="vl" style="left:48px;top:86px;height:462.0px"></div>
<div class="vl" style="left:126px;top:125.6px;height:483.7px"></div>
<div class="abs" style="z-index:3;left:394.6px;top:86px;width:9.9px;height:523.3px;background:linear-gradient(to right,#e4e6e9 0,#ebedef 2.5px,#f1f2f4 4px,#f3f4f5 100%);border-right:1px solid #e6e8eb"></div>
<div class="vl" style="left:525.6px;top:86px;height:523.3px"></div>
<div class="vl" style="left:647px;top:86px;height:523.3px"></div>
<div class="vl" style="left:760px;top:86px;height:523.3px"></div>
<div class="vl" style="left:881.4px;top:86px;height:523.3px"></div>
<div class="vl" style="left:1003px;top:86px;height:523.3px"></div>
<div class="vl" style="left:1125px;top:86px;height:523.3px"></div>
<div class="vl" style="left:1246px;top:86px;height:523.3px"></div>
<div class="vl" style="left:1367.6px;top:86px;height:523.3px"></div>
<span class="caret abs" style="z-index:4;left:395.6px;top:106px;border-left-width:3.5px;border-right-width:0;border-top-width:4.5px"></span>
<div class="abs" style="left:137px;top:554.7px;font-size:12px;letter-spacing:-0.2px;color:#2a3036;line-height:16px;white-space:nowrap;-webkit-text-stroke:0.2px #2a3036">Results from 11 campaigns <svg width="10" height="10" viewBox="0 0 10 10" style="vertical-align:-1px"><circle cx="5" cy="5" r="5" fill="#2a3036"/><path d="M5 4.200v3.600M5 2v1.200" stroke="#fff" stroke-width="1.400"/></svg></div>
<div class="num abs" style="left:404.5px;width:117.1px;top:554.0px;color:#30363c">—</div><div class="sub abs" style="left:404.5px;width:117.1px;top:573.0px">Multiple conversions</div>
<div class="num abs" style="left:525.6px;width:117.4px;top:554.0px;color:#30363c">—</div><div class="sub abs" style="left:525.6px;width:117.4px;top:573.0px">Multiple conversions</div>
<div class="num abs" style="left:760px;width:115.4px;top:554.0px;color:#30363c">3,056.35<span class="cur" dir="rtl">ج.م.</span></div><div class="sub abs" style="left:760px;width:115.4px;top:573.0px">Total spent</div>
<div class="num abs" style="left:881.4px;width:116.6px;top:554.0px;color:#30363c">145,999</div><div class="sub abs" style="left:881.4px;width:116.6px;top:573.0px">Total</div>
<div class="num abs" style="left:1003px;width:116.0px;top:554.0px;color:#30363c"><span class="ul">124,220</span></div><div class="sub abs" style="left:1003px;width:111.0px;top:573.0px">Accounts Center acc...</div>
<div class="num abs" style="left:1125px;width:116.0px;top:554.0px;color:#30363c">18,109</div><div class="sub abs" style="left:1125px;width:116.0px;top:573.0px">Total</div>
<div class="num abs" style="left:1246px;width:116.6px;top:554.0px;color:#30363c">2,964</div><div class="sub abs" style="left:1246px;width:116.6px;top:573.0px">Total</div>
<div class="num abs" style="left:1367.6px;width:117.9px;top:554.0px;color:#30363c">1,636</div><div class="sub abs" style="left:1367.6px;width:117.9px;top:573.0px">Total</div>
<div class="abs" style="left:0;top:609.3px;width:1494px;height:14.7px;background:#fff"></div>
<div class="abs" style="left:718px;top:141px;font-size:15px;color:#f4f5f6;white-space:nowrap;z-index:5">Full-screen Snip</div>
<div class="abs" style="left:162px;top:612px;width:764px;height:7px;border-radius:4px;background:#c6c8ca"></div>
<div class="abs" style="z-index:5;left:0;top:86px;width:8px;height:538px;background:#fff"></div>
<div class="abs" style="z-index:5;left:1487.5px;top:42px;width:6.5px;height:582px;background:linear-gradient(to right,#fff 20%,#e4eaf1)"></div>
</div></div>
  <!-- More Like This pill -->
  <div class="abs" style="left:231px;top:160px;width:195px;height:44px;border-radius:22px;background:rgba(0,0,0,.59)"></div>
  <svg class="abs" style="left:255px;top:173px" width="22" height="19" viewBox="0 0 22 19"><path d="M3 1h17" stroke="#fff" stroke-width="1.500"/><rect x="1" y="3" width="19" height="14" fill="none" stroke="#fff" stroke-width="1.800"/><path d="M3 15l5-6 4 4 2.500-2.500L19 15z" fill="#fff"/><circle cx="15.500" cy="7" r="1.500" fill="#fff"/></svg>
  <div class="abs" style="left:285px;top:172.500px;font-size:17px;font-weight:700;color:#fff;line-height:22px;white-space:nowrap;letter-spacing:-0.1px">More Like This</div>
  <!-- close -->
  <div class="abs" style="left:1845px;top:26px;width:50px;height:50px;border-radius:25px;background:#363636"></div>
  <svg class="abs" style="left:1863px;top:44px" width="14" height="14" viewBox="0 0 14 14"><path d="M1.500 1.500l11 11M12.500 1.500l-11 11" stroke="#fff" stroke-width="2.400"/></svg>
  <!-- dim sidebar -->
  <div class="abs" style="left:1826px;top:130px;width:56px;height:56px;border-radius:28px;background:linear-gradient(to right,#151515 0,#141414 45%,#0c0b0a 60%);overflow:hidden"><div class="abs" style="left:17px;top:5px;width:22px;height:28px;border-radius:10px 10px 11px 11px;background:#15110f"></div><div class="abs" style="left:2px;top:34px;width:52px;height:30px;border-radius:20px 20px 0 0;background:#0b0b0c"></div><div class="abs" style="left:22px;top:35px;width:13px;height:22px;background:#181a1d;clip-path:polygon(0 0,100% 0,90% 100%,10% 100%)"></div></div>
  <div class="abs" style="left:1826px;top:217px;width:56px;height:56px;border-radius:28px;background:#1c1c1c"></div>
  <svg class="abs" style="left:1844px;top:237px" width="20" height="16" viewBox="0 0 20 16"><path d="M1 1h6l2 2h8v3H4l-3 8z" fill="#060606"/><path d="M4 7h15l-3 8H1z" fill="#060606"/></svg>
  <div class="abs" style="left:1826px;top:285px;width:56px;text-align:center;font-size:13px;font-weight:700;color:#1c1c1c">Save</div>
  <div class="abs" style="left:1826px;top:332px;width:56px;height:56px;border-radius:28px;background:#1c1c1c"></div>
  <svg class="abs" style="left:1845px;top:349px" width="18" height="20" viewBox="0 0 18 20"><path d="M9 13V3M5 6l4-4 4 4" fill="none" stroke="#060606" stroke-width="2"/><path d="M4 9H1v10h16V9h-3" fill="none" stroke="#060606" stroke-width="2"/></svg>
  <div class="abs" style="left:1826px;top:400px;width:56px;text-align:center;font-size:13px;font-weight:700;color:#1c1c1c">Share</div>
  <div class="abs" style="left:1826px;top:448px;width:56px;height:56px;border-radius:28px;background:#000c36"></div>
  <svg class="abs" style="left:1845px;top:467px" width="18" height="18" viewBox="0 0 18 18"><path d="M1 8h3.500v9H1zM6 8l3-7c1.500 0 2.500 1 2.500 2.500L11 7h4.500c1 0 1.700.8 1.500 1.800l-1.300 6.500c-.2 1-1 1.700-2 1.700H6z" fill="#0c1f5a"/></svg>
  <div class="abs" style="left:1818px;top:496px;width:11px;height:11px;border-radius:6px;background:#051646"></div>
  <div class="abs" style="left:1806px;top:515px;width:96px;text-align:center;font-size:13px;font-weight:700;color:#0a1434">Appreciate</div>
  <!-- bottom blue circle -->
  <div class="abs" style="left:903px;top:878px;width:96px;height:96px;border-radius:48px;background:#000f2c"></div>
  <svg class="abs" style="left:1814px;top:894px" width="22" height="19" viewBox="0 0 22 19"><path d="M0 0h8L0 19zM22 0h-8l8 19zM11 7l5 12h-3.500l-1.500-4H7.500z" fill="#050505"/></svg><div class="abs" style="left:1843px;top:894px;font-size:16px;font-weight:700;color:#060606">Adobe</div>
  <div id="sb"></div><div id="sbthumb"></div>
  <svg class="abs" style="left:1904px;top:9px" width="13" height="7" viewBox="0 0 13 7"><path d="M0 7l6.500-7 6.500 7z" fill="#2b2b2b"/></svg>
  <svg class="abs" style="left:1904px;top:908px" width="13" height="7" viewBox="0 0 13 7"><path d="M0 0l6.500 7 6.500-7z" fill="#0b0b0b"/></svg>
</div>
<div id="taskbar">
  <svg class="abs" style="left:20px;top:15px" width="21" height="21" viewBox="0 0 21 21"><path d="M0 3l8.500-1.200v8.200H0zM9.500 1.600L21 0v10H9.500zM0 11h8.500v8.200L0 18zM9.500 11H21v10l-11.500-1.600z" fill="#fff"/></svg>
  <div class="abs" style="left:60px;top:1px;width:360px;height:49px;background:#f2f2f2;overflow:hidden">
    <svg class="abs" style="left:15px;top:14px" width="22" height="22" viewBox="0 0 22 22"><circle cx="13.500" cy="8.500" r="6.500" fill="none" stroke="#222" stroke-width="1.600"/><path d="M9 13.500L1.500 21" stroke="#222" stroke-width="1.800"/></svg>
    <div class="abs" style="left:50px;top:12px;font-size:19px;line-height:26px;color:#2b2b2b;white-space:nowrap;letter-spacing:-0.28px">Type here to search</div>
    <!-- books -->
    <div class="abs" style="left:266px;top:33px;width:44px;height:10px;border-radius:2px;background:#e9c65a"></div>
    <div class="abs" style="left:273px;top:34px;width:28px;height:7px;border-radius:3px;background:#e8889a"></div>
    <div class="abs" style="left:264px;top:43px;width:46px;height:8px;background:#8bc34a"></div>
    <div class="abs" style="left:310px;top:19px;width:6px;height:31px;background:#3f7fe0;border-radius:1px"></div>
    <div class="abs" style="left:316px;top:11px;width:11px;height:39px;background:#e57bb5;border-radius:2px 2px 0 0"></div>
    <div class="abs" style="left:327px;top:7px;width:12px;height:43px;background:#9b6fdc;border-radius:2px 2px 0 0;border-top:7px solid #e9c65a"></div>
    <div class="abs" style="left:339px;top:12px;width:9px;height:38px;background:#c5703a;border-radius:2px 2px 0 0"></div>
    <div class="abs" style="left:348px;top:8px;width:12px;height:42px;background:#2e8b57;border-radius:2px 2px 0 0"></div>
  </div>
  <svg class="abs" style="left:439px;top:14px" width="22" height="21" viewBox="0 0 22 21"><g fill="none" stroke="#fff" stroke-width="1.500"><rect x="1" y="4.500" width="12.500" height="11.500"/><path d="M1 3V1h12.500v2M1 17.500v2h12.500v-2M18.700 1v5M18.700 9v10.500"/></g><rect x="17.200" y="6" width="3" height="3" fill="#fff"/></svg>
  <!-- copilot -->
  <svg class="abs" style="left:499px;top:11px" width="30" height="28" viewBox="0 0 30 28"><defs><linearGradient id="cpa" x1=".3" y1="0" x2=".5" y2="1"><stop offset="0" stop-color="#2a7df5"/><stop offset=".35" stop-color="#2bc0e0"/><stop offset=".7" stop-color="#7fd04a"/><stop offset="1" stop-color="#f5c518"/></linearGradient><linearGradient id="cpb" x1=".6" y1="0" x2=".4" y2="1"><stop offset="0" stop-color="#8a5cf0"/><stop offset=".45" stop-color="#d45ad8"/><stop offset=".8" stop-color="#f0607a"/><stop offset="1" stop-color="#f59a30"/></linearGradient></defs><path d="M7.500 2h8.500c2 0 3 1 2.500 3l-3.500 13c-.6 2-2 3-4 3H4c-2.500 0-3.500-1.500-2.800-4L4 5c.5-2 1.700-3 3.500-3z" fill="url(#cpa)"/><path d="M19 6h7c2.500 0 3.500 1.500 2.800 4L26 22c-.5 2-1.800 3.500-3.800 3.500H13c-2 0-3-1-2.500-3l3.500-13c.6-2 2.500-3.500 5-3.500z" fill="url(#cpb)"/><path d="M17.500 4.500L12 23" stroke="#1c1c1c" stroke-width="2.200"/><path d="M14 2h2c2 0 3 1 2.500 3l-1 3.500z" fill="#2450c8"/></svg>
  <!-- edge -->
  <svg class="abs" style="left:560px;top:9px" width="32" height="32" viewBox="0 0 32 32"><defs><linearGradient id="eda" x1="0" y1="1" x2="1" y2="0"><stop offset="0" stop-color="#0d4fa8"/><stop offset=".5" stop-color="#1a86d8"/><stop offset="1" stop-color="#2fb6e6"/></linearGradient><linearGradient id="edb" x1="0" y1=".6" x2="1" y2="0"><stop offset="0" stop-color="#2cb4e8"/><stop offset=".55" stop-color="#3cc9b0"/><stop offset="1" stop-color="#78d84a"/></linearGradient></defs><circle cx="16" cy="16" r="15.200" fill="url(#eda)"/><path d="M2 12C4 5 9.500.8 16 .8c8.500 0 15.200 6 15.200 13.200 0 4.500-3.500 7-7.200 7-3 0-4.500-1.200-4.500-2.500 0-.8.800-1.200.8-3 0-3-2.500-5.500-6.500-5.500C9 10 4 13 2 19.500z" fill="url(#edb)"/><path d="M13 20.500c0-2.500 1.500-4.500 3.500-5.500-.5 1-.5 2 0 3 1 2.200 4 3.500 7.500 3 2.500-.4 4.500-1.500 5.500-3-1 6-6 10.500-12 10.500-4 0-4.500-5.500-4.500-8z" fill="#1c1c1c"/><path d="M9 27.500c-4-3-5.500-8-3-12.500 1.500-2.700 4.500-4.500 7.800-5-3 1.500-5 5-4.500 9 .4 3.500 2.500 7 6.500 9.500-2.500.5-5 0-6.800-1z" fill="#0c4a9e"/></svg>
  <!-- explorer -->
  <svg class="abs" style="left:623px;top:12px" width="30" height="25" viewBox="0 0 30 25"><path d="M1 2.500C1 1.500 1.600 1 2.500 1h8l2.500 2.500h14.500c.9 0 1.500.6 1.500 1.500V8H1z" fill="#e8a820"/><rect x="1" y="4.500" width="28" height="19" rx="1" fill="#fcd462"/><path d="M1 17h28v5.500a1 1 0 01-1 1H2a1 1 0 01-1-1z" fill="#f7c240"/><path d="M7 24V15c0-.6.400-1 1-1h14c.6 0 1 .4 1 1v9h-4.500v-6h-7v6z" fill="#3f97e8"/></svg>
  <!-- store -->
  <svg class="abs" style="left:684px;top:9px" width="32" height="32" viewBox="0 0 32 32"><path d="M9.500 9V5.500c0-1.400 1-2.500 2.500-2.500h8c1.500 0 2.500 1.100 2.500 2.500V9" fill="none" stroke="#35b0f0" stroke-width="2.200"/><path d="M1.500 7.500h29V27c0 2-1.500 3.500-3.500 3.500H5c-2 0-3.500-1.500-3.500-3.500z" fill="#f3f3f3"/><rect x="10" y="12.500" width="5.300" height="5.300" fill="#f25022"/><rect x="16.500" y="12.500" width="5.300" height="5.300" fill="#7fba00"/><rect x="10" y="19" width="5.300" height="5.300" fill="#00a4ef"/><rect x="16.500" y="19" width="5.300" height="5.300" fill="#ffb900"/></svg>
  <!-- outlook -->
  <svg class="abs" style="left:746px;top:10px" width="31" height="30" viewBox="0 0 31 30"><defs><linearGradient id="ola" x1="0" y1="0" x2="1" y2="1"><stop offset="0" stop-color="#4cc2f8"/><stop offset=".6" stop-color="#2a9af0"/><stop offset="1" stop-color="#2fb4f0"/></linearGradient></defs><path d="M2 10.500L14.500 1.200c.8-.6 1.700-.6 2.500 0L29 10.500c.6.500 1 1.200 1 2V26c0 1.700-1.300 3-3 3H5c-1.700 0-3-1.300-3-3V12.500c0-.8.400-1.500 1-2z" fill="url(#ola)"/><path d="M9 6l15 10 5.500-5-2-1.500L19 16z" fill="#2458c8" opacity=".85"/><path d="M16 1l13 9.500-5 4.500L11.500 4.500z" fill="#6ad0fa" opacity=".7"/><path d="M12 29l18-12v9c0 1.700-1.300 3-3 3z" fill="#1f8ae8" opacity=".8"/><rect x="0" y="14.500" width="12.500" height="12.500" rx="2.500" fill="#1262c8"/><circle cx="6.200" cy="20.700" r="3" fill="none" stroke="#fff" stroke-width="1.700"/></svg>
  <!-- firefox -->
  <svg class="abs" style="left:808px;top:8px" width="32" height="32" viewBox="0 0 32 32"><defs><radialGradient id="ffa" cx=".7" cy=".2" r="1"><stop offset="0" stop-color="#ffe226"/><stop offset=".35" stop-color="#ff9a1c"/><stop offset=".65" stop-color="#ff4a3a"/><stop offset="1" stop-color="#e31587"/></radialGradient><radialGradient id="ffb" cx=".5" cy=".4" r=".6"><stop offset="0" stop-color="#9059ff"/><stop offset="1" stop-color="#6a2ee0"/></radialGradient></defs><path d="M16 4c2-2 3-3.500 3.200-4 3 2.500 5 5 5.500 7.500 1-1 1.300-2 1.300-3 2.500 3 4.500 7 4.500 12C30.500 24.500 24 31 16 31S1.500 24.500 1.500 16.500c0-3 1-5.500 2.200-7.500.2 1.200.6 2 1.300 2.700 0-2.500 1-5 3.500-6.700 0 1.500.8 3 2.500 3.500C12.500 7 14 5.500 16 4z" fill="url(#ffa)"/><circle cx="16.500" cy="17" r="7.500" fill="url(#ffb)"/><path d="M9.500 14c2-2 5-1.500 6.500 0 1.500 1.400 3.500 1.500 5 .5-1 3-3.500 4-6 3.500-2.500-.5-4-2-5.500-4z" fill="#ff9a1c"/></svg>
  <!-- chrome 1 -->
  <div class="abs" style="left:871px;top:10px;width:30px;height:30px;border-radius:15px;background:conic-gradient(from -60deg,#e33b2e 0 120deg,#fbc116 120deg 240deg,#2a9a48 240deg 360deg)"></div>
  <div class="abs" style="left:877.500px;top:16.500px;width:17px;height:17px;border-radius:9px;background:#3b82f0;border:2.500px solid #fff"></div>
  <!-- chrome 2 active -->
  <div class="abs" style="left:918px;top:0;width:61px;height:47px;background:#4b4b4b"></div>
  <div class="abs" style="left:918px;top:46.500px;width:61px;height:3.500px;background:#76b9ed"></div>
  <div class="abs" style="left:933px;top:10px;width:30px;height:30px;border-radius:15px;background:conic-gradient(from -60deg,#e33b2e 0 120deg,#fbc116 120deg 240deg,#2a9a48 240deg 360deg)"></div>
  <div class="abs" style="left:939.500px;top:16.500px;width:17px;height:17px;border-radius:9px;background:#3b82f0;border:2.500px solid #fff"></div>
  <!-- A/C battery -->
  <div class="abs" style="left:1184px;top:11px;width:63px;height:29px;border:1.500px solid #fff;background:#000;color:#fff;font-size:17px;line-height:29px;text-align:center;letter-spacing:-0.3px">A/C</div>
  <div class="abs" style="left:1247px;top:17px;width:4px;height:17px;border:1.500px solid #fff;border-left:0"></div>
  <!-- weather -->
  <div class="abs" style="left:1348px;top:12px;width:26px;height:26px;border-radius:13px;background:linear-gradient(140deg,#ffd21a 10%,#ff9a10 55%,#e8640a 95%)"></div>
  <div class="abs" style="left:1362px;top:10px;width:13px;height:13px;border-radius:7px;background:#d42a2a;color:#fff;font-size:9px;line-height:13px;text-align:center;font-weight:700">1</div>
  <div class="abs" style="left:1386px;top:14.500px;font-size:17px;line-height:24px;color:#fff;white-space:nowrap;letter-spacing:-0.3px">20°C</div>
  <div class="abs" style="left:1428px;top:14px;width:62px;text-align:right;font-size:17px;line-height:24px;color:#fff;white-space:nowrap" dir="rtl">مشمس</div>
  <svg class="abs" style="left:1521px;top:19px" width="18" height="11" viewBox="0 0 18 11"><path d="M1 10l8-8 8 8" fill="none" stroke="#fff" stroke-width="1.500"/></svg>
  <div class="abs" style="left:1550px;top:15px;width:20px;height:20px;border-radius:10px;background:#f2c81e"></div>
  <svg class="abs" style="left:1553px;top:18px" width="14" height="14" viewBox="0 0 14 14"><path d="M7 1.500v11M1.500 7h11" stroke="#2e9a3a" stroke-width="3.500"/></svg>
  <div class="abs" style="left:1579px;top:21px;width:18px;height:10px;border-radius:5px;background:#c9c9c9"></div><div class="abs" style="left:1585px;top:17px;width:10px;height:10px;border-radius:5px;background:#d8d8d8"></div>
  <div class="abs" style="left:1588px;top:25px;width:11px;height:11px;border-radius:6px;background:#1f7ae0;color:#fff;font-size:8px;line-height:11px;text-align:center;font-weight:700">i</div>
  <svg class="abs" style="left:1612px;top:15px" width="18" height="20" viewBox="0 0 18 20"><g fill="none" stroke="#fff" stroke-width="1.200"><rect x="1" y="4.500" width="11" height="11.500" rx="2"/><path d="M12 8.500l4.500-2.500v8.500l-4.500-2.500M2.500 2.500Q6.500 0 10.500 2.500M2.500 18Q6.500 20.500 10.500 18"/></g></svg>
  <svg class="abs" style="left:1639px;top:17px" width="22" height="16" viewBox="0 0 22 16"><rect x="5" y="3" width="15" height="10" fill="#fff"/><path d="M20 6h2v4h-2zM0 6h4M2 4v5" stroke="#fff" stroke-width="1.400"/></svg>
  <svg class="abs" style="left:1672px;top:16px" width="20" height="18" viewBox="0 0 20 18"><g fill="none" stroke="#fff" stroke-width="1.400"><path d="M2 17a15 15 0 0115-15" opacity=".9"/><path d="M6.500 17A10.500 10.500 0 0117 6.500"/><path d="M11 17a6 6 0 016-6"/></g><circle cx="16" cy="16" r="1.700" fill="#fff"/></svg>
  <svg class="abs" style="left:1699px;top:16px" width="22" height="18" viewBox="0 0 22 18"><path d="M1 6.500h3.500L9 2.500v13l-4.500-4H1z" fill="none" stroke="#fff" stroke-width="1.300"/><path d="M12 6a4 4 0 010 6M14.500 3.500a8 8 0 010 11" fill="none" stroke="#fff" stroke-width="1.200"/><path d="M17.500 1.500a11 11 0 010 15" fill="none" stroke="#888" stroke-width="1.200"/></svg>
  <div class="abs" style="left:1733px;top:14px;font-size:14.500px;line-height:22px;color:#fff;letter-spacing:-0.2px">ENG</div>
  <div class="abs" style="left:1760px;top:2px;width:104px;text-align:center;font-size:15px;line-height:22px;color:#fff;letter-spacing:-0.3px">9:42 AM</div>
  <div class="abs" style="left:1760px;top:25.500px;width:104px;text-align:center;font-size:15px;line-height:22px;color:#fff;letter-spacing:-0.3px">4/19/2026</div>
  <svg class="abs" style="left:1868px;top:14px" width="22" height="22" viewBox="0 0 22 22"><path d="M1 1h19v15H8l-4 4v-4H1z" fill="#fff"/><path d="M4.500 5h12M4.500 8.500h12M4.500 12h8" stroke="#1c1c1c" stroke-width="1.300"/></svg>
  <div class="abs" style="left:1878px;top:25px;width:20px;height:20px;border-radius:10px;background:#2a2a2a;border:1.500px solid #9a9a9a;color:#fff;font-size:12.500px;line-height:17px;text-align:center;font-weight:700">5</div>
  <div class="abs" style="left:1914px;top:0;width:1px;height:50px;background:#8a8a8a"></div>
</div>
</body>
</html>
